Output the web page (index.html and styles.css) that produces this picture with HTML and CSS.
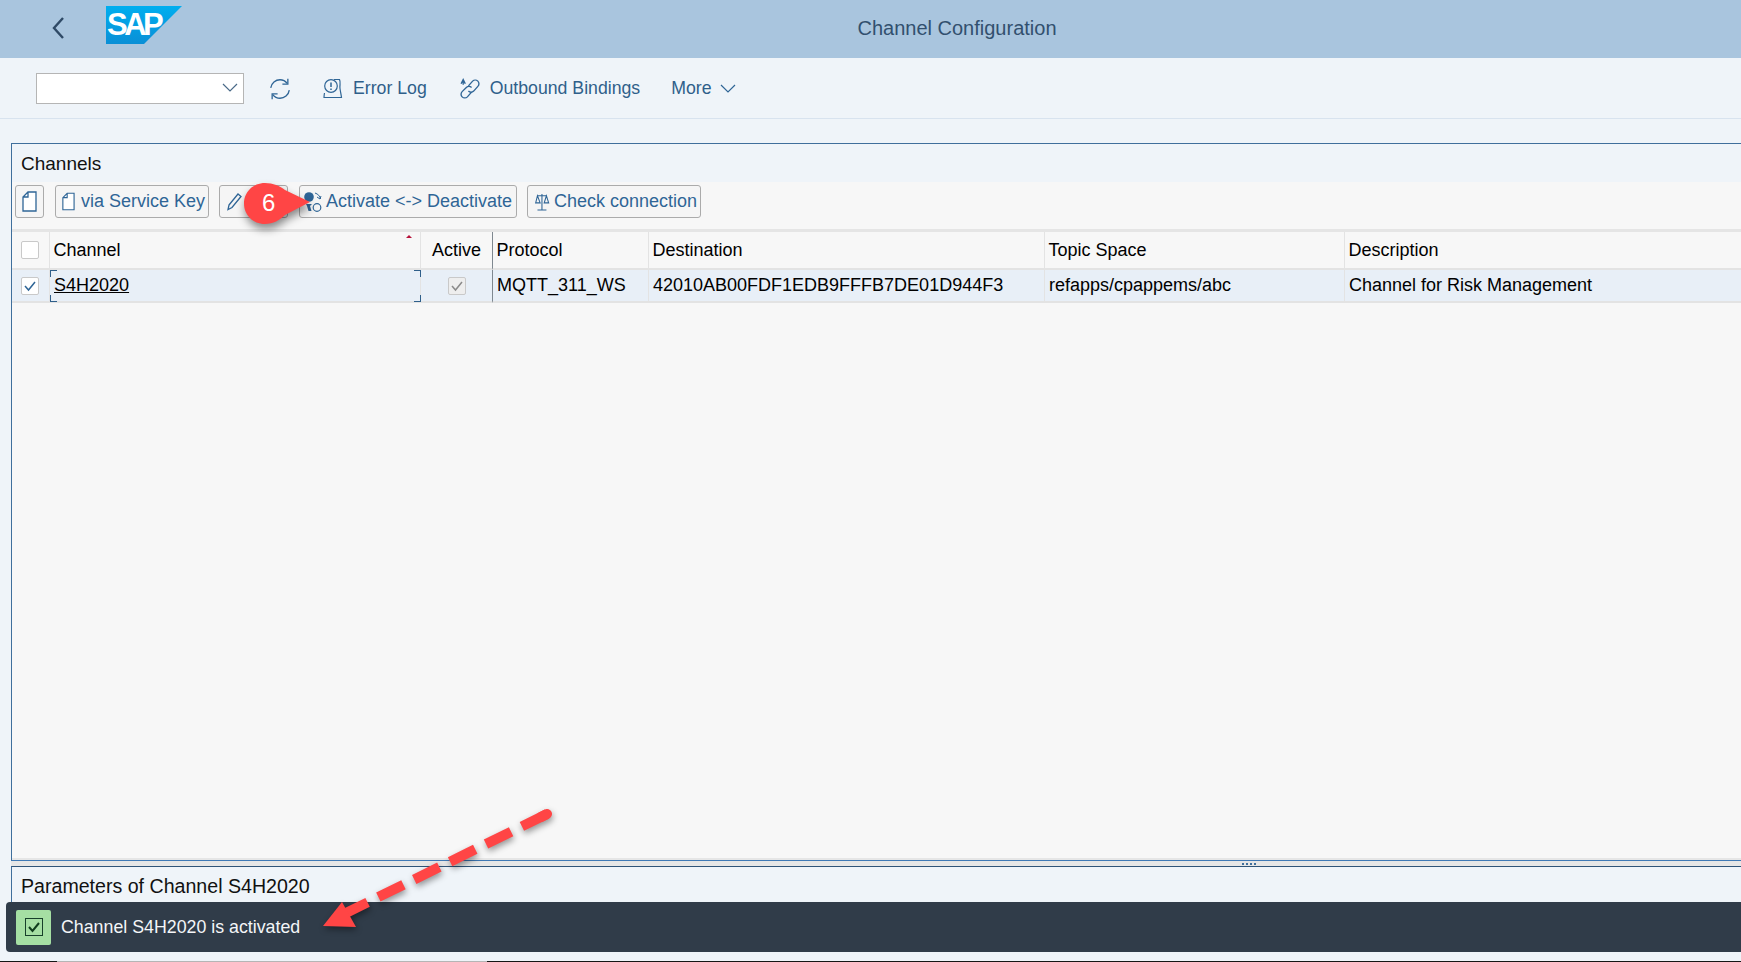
FILE: index.html
```html
<!DOCTYPE html>
<html lang="en">
<head>
<meta charset="utf-8">
<title>Channel Configuration</title>
<link rel="stylesheet" href="styles.css">
</head>
<body>
<header class="shell">
  <svg class="back" width="14" height="24" viewBox="0 0 14 24"><path d="M12 2 3 12l9 10" fill="none" stroke="#2f4a66" stroke-width="2.4"/></svg>
  <div class="logo">
    <svg width="76" height="38" viewBox="0 0 76 38"><defs><linearGradient id="sapg" x1="0" y1="0" x2="0" y2="1"><stop offset="0" stop-color="#00aeef"/><stop offset="1" stop-color="#0a8fd6"/></linearGradient></defs><polygon points="0,0 76,0 38,38 0,38" fill="url(#sapg)"/></svg>
    <span class="logo-text">SAP</span>
  </div>
  <div class="title">Channel Configuration</div>
</header>

<nav class="toolbar">
  <div class="select"><svg width="16" height="10" viewBox="0 0 16 10"><path d="M1 1l7 7 7-7" fill="none" stroke="#4a6a88" stroke-width="1.2"/></svg></div>
  <svg class="tool-refresh" width="24" height="24" viewBox="0 0 22 22" fill="none" stroke="#2f6596" stroke-width="1.2"><path d="M2.500 10C3.100 5.600 7 2.500 11 2.500c2.800 0 5 1.200 6.600 3.400"/><path d="M18.200 1.500v5h-5"/><path d="M19.500 12c-.6 4.400-4.500 7.500-8.500 7.500-2.800 0-5-1.200-6.600-3.400"/><path d="M3.800 20.500v-5h5"/></svg>
  <div class="tool tool-error">
    <svg width="20" height="22" viewBox="0 0 20 22" fill="none" stroke="#2f6596" stroke-width="1.2"><circle cx="8" cy="8" r="6.300"/><path d="M8 4.500v4.500M8 10.500v1.500" stroke-width="1.500"/><path d="M11 1.500h5.500c1.500 3 0 5 .5 9 .3 2.500 1 5 1.500 9H1c0-1.500.2-3 .5-4.500"/></svg>
    <span>Error Log</span>
  </div>
  <div class="tool tool-bind">
    <svg width="22" height="24" viewBox="0 0 21 22" fill="none" stroke="#2f6596" stroke-width="1.300"><path d="M9 8l4-4.500a3.500 3.500 0 0 1 5 5L14 13a3.500 3.500 0 0 1-5 0"/><path d="M12 14l-4 4.500a3.500 3.500 0 0 1-5-5L7 9.500a3.500 3.500 0 0 1 5 0"/><path d="M2 6l2-4 2 4M4 2v5"/></svg>
    <span>Outbound Bindings</span>
  </div>
  <div class="tool tool-more">
    <span>More</span>
    <svg width="16" height="10" viewBox="0 0 16 10"><path d="M1 1l7 7 7-7" fill="none" stroke="#2f6596" stroke-width="1.200"/></svg>
  </div>
</nav>

<main class="content">
  <section class="panel">
    <h2 class="panel-title">Channels</h2>
    <div class="actions">
      <button class="btn btn-new"><svg class="page" width="15" height="21" viewBox="0 0 15 21"><path d="M6 1h8v19H1V6zM6 1v5H1" fill="#fff" stroke="#2f6596" stroke-width="1.300"/></svg></button>
      <button class="btn btn-key"><svg class="page" width="15" height="21" viewBox="0 0 15 21"><path d="M6 1h8v19H1V6zM6 1v5H1" fill="#fff" stroke="#2f6596" stroke-width="1.300"/></svg>via Service Key</button>
      <button class="btn btn-edit"><svg width="18" height="20" viewBox="0 0 18 20"><path d="M4 13 13 2l3 2.500-9 11-4 2z" fill="none" stroke="#2f6596" stroke-width="1.300"/></svg></button>
      <button class="btn btn-activate"><svg width="20" height="22" viewBox="0 0 20 22"><circle cx="6" cy="6" r="4.800" fill="#2f6596"/><path d="M3 13h6l-2 2 1.500 5h-3L4 15z" fill="#2f6596"/><circle cx="14" cy="16.500" r="3.800" fill="none" stroke="#2f6596" stroke-width="1.200"/><path d="M12 2c3 1 5 3 5.500 6M14 6l3 2 1-3" fill="none" stroke="#2f6596"/></svg>Activate &lt;-&gt; Deactivate</button>
      <button class="btn btn-check"><svg width="20" height="22" viewBox="0 0 20 22" fill="none" stroke="#2f6596" stroke-width="1.200"><path d="M10 2v18M5 20h10M5 4h10"/><path d="M5 4 3 12h5zM15 4l-2.500 8h5z"/></svg>Check connection</button>
    </div>
    <div class="table">
      <div class="cell head cell-sel"><span class="cb"></span></div>
      <div class="cell head cell-channel">Channel<i class="sort"></i></div>
      <div class="cell head cell-active">Active</div>
      <div class="cell head cell-div">Protocol</div>
      <div class="cell head">Destination</div>
      <div class="cell head">Topic Space</div>
      <div class="cell head last">Description</div>

      <div class="cell row cell-sel"><span class="cb"><svg width="14" height="12" viewBox="0 0 14 12"><path d="M2 6l3.500 4L12 2" fill="none" stroke="#2f6596" stroke-width="1.500"/></svg></span></div>
      <div class="cell row cell-focus"><u class="link">S4H2020</u><i class="corner tl"></i><i class="corner tr"></i><i class="corner bl"></i><i class="corner br"></i></div>
      <div class="cell row cell-active"><span class="cb cb-off"><svg width="14" height="12" viewBox="0 0 14 12"><path d="M2 6l3.500 4L12 2" fill="none" stroke="#8a8a8a" stroke-width="1.500"/></svg></span></div>
      <div class="cell row cell-div">MQTT_311_WS</div>
      <div class="cell row">42010AB00FDF1EDB9FFFB7DE01D944F3</div>
      <div class="cell row">refapps/cpappems/abc</div>
      <div class="cell row last">Channel for Risk Management</div>
    </div>
  </section>

  <div class="splitter"><i></i><i></i><i></i><i></i></div>

  <section class="params">
    <h2 class="panel-title">Parameters of Channel S4H2020</h2>
  </section>

  <div class="message">
    <span class="msg-icon"><span class="msg-box"><svg width="14" height="12" viewBox="0 0 14 12"><path d="M2 6l3.500 4L12 2" fill="none" stroke="#0f3d1c" stroke-width="2"/></svg></span></span>
    <span class="msg-text">Channel S4H2020 is activated</span>
  </div>
</main>

<div class="foot"><i></i></div>

<svg class="bubble" width="74" height="58" viewBox="0 0 74 58"><path d="M24 2C32 2 39 5 44 9L69 21 44 34C39 39 32 43 24 43 12 43 3 34 3 22.500S12 2 24 2z" fill="#ff4545"/></svg>
<span class="bubble-num">6</span>

<svg class="arrow" width="250" height="130" viewBox="0 0 250 130"><path d="M226 8 25 107" fill="none" stroke="#ff4545" stroke-width="10" stroke-dasharray="28 12"/><path d="M226 8l-6 3" fill="none" stroke="#ff4545" stroke-width="10" stroke-linecap="round"/><polygon points="2,120 21,96 35,121" fill="#ff4545"/></svg>
</body>
</html>
```
FILE: styles.css
```css
* { box-sizing: border-box; }
html, body { margin: 0; height: 100%; }
body {
  position: relative;
  width: 1741px;
  height: 962px;
  overflow: hidden;
  display: flex;
  flex-direction: column;
  background: #eff4f9;
  font-family: "Liberation Sans", Arial, sans-serif;
  color: #000;
}
.shell {
  height: 58px;
  flex: none;
  background: #a9c5de;
  display: flex;
  align-items: flex-start;
  position: relative;
  padding-left: 51px;
}
.back { margin-top: 16px; }
.logo { position: relative; margin: 6px 0 0 41px; width: 76px; height: 38px; }
.logo svg { display: block; }
.logo-text {
  position: absolute;
  left: 1px; top: 3px;
  font-size: 31px;
  line-height: 32px;
  font-weight: bold;
  letter-spacing: -3.500px;
  color: #fff;
}
.title {
  position: absolute;
  left: 0; right: 0; top: 15px;
  padding-left: 173px;
  text-align: center;
  font-size: 20px;
  line-height: 26px;
  color: #32506e;
}
.toolbar {
  height: 61px;
  flex: none;
  display: flex;
  align-items: center;
  padding: 1px 0 0 36px;
  border-bottom: 1px solid #d8e3ef;
  color: #2f5f8a;
  font-size: 17.700px;
}
.select {
  width: 208px;
  height: 31px;
  margin-top: -1px;
  background: #fff;
  border: 1px solid #b5b5b5;
  display: flex;
  align-items: center;
  justify-content: flex-end;
  padding-right: 5px;
}
.tool-refresh { margin-left: 24px; }
.tool { display: flex; align-items: center; }
.tool-error { margin-left: 31px; gap: 10px; }
.tool-bind { margin-left: 32px; gap: 9px; }
.tool-more { margin-left: 31px; gap: 8px; }
.content {
  flex: 1;
  display: flex;
  flex-direction: column;
  padding: 24px 0 0 0;
  min-height: 0;
}
.panel {
  height: 718px;
  flex: none;
  margin-left: 11px;
  background: #f7f7f7;
  border-top: 1px solid #3f6f9c;
  border-left: 1px solid #3f6f9c;
  border-bottom: 1px solid #3f79b5;
  box-shadow: inset 0 -2px 0 #e6e6e6;
  display: flex;
  flex-direction: column;
}
.panel-title {
  margin: 0;
  height: 38px;
  padding-left: 9px;
  background: #eff4f9;
  font-size: 19px;
  line-height: 40px;
  font-weight: normal;
  color: #111;
}
.actions {
  height: 50px;
  flex: none;
  display: flex;
  align-items: flex-start;
  padding: 3px 0 0 3px;
  gap: 11px;
  border-bottom: 3px solid #e5e5e5;
}
.btn {
  height: 33px;
  padding: 0 3px;
  display: flex;
  align-items: center;
  gap: 2px;
  background: #f5f5f5;
  border: 1px solid #ababab;
  border-radius: 3px;
  font: 18px "Liberation Sans", Arial, sans-serif;
  color: #2f6596;
  white-space: nowrap;
}
.btn-new { width: 29px; justify-content: center; padding: 0; }
.btn-key { width: 154px; padding-left: 6px; gap: 6px; margin-right: -1px; }
.btn-edit { width: 69px; padding-left: 5px; }
.btn-activate { width: 218px; padding-left: 3px; gap: 3px; margin-right: -1px; }
.btn-check { width: 174px; padding-left: 5px; gap: 3px; }
.table {
  display: grid;
  grid-template-columns: 38px 371px 72px 156px 396px 300px 1fr;
  grid-template-rows: 38px 33px;
}
.cell {
  display: flex;
  align-items: center;
  font-size: 18px;
  white-space: nowrap;
  border-right: 1px solid #e3e3e3;
  border-bottom: 2px solid #e3e3e3;
  position: relative;
}
.cell.last { border-right: none; }
.head { padding-left: 3.500px; }
.row { background: #e8eff7; padding-left: 4px; }
.cell-sel { padding-left: 9px; }
.cell-active { justify-content: center; padding-left: 0; }
.cell-div { border-left: 1px solid #7f8890; margin-left: -1px; }
.cb {
  width: 18px;
  height: 18px;
  background: #fff;
  border: 1px solid #c9c9c9;
  border-radius: 2px;
  display: flex;
  align-items: center;
  justify-content: center;
}
.cb-off { background: #eeeeee; }
.sort {
  position: absolute;
  right: 8px; top: 3px;
  border-left: 3px solid transparent;
  border-right: 3px solid transparent;
  border-bottom: 3px solid #b8123a;
}
.corner { position: absolute; width: 7px; height: 7px; border: 0 solid #2f5f8a; }
.tl { left: 0; top: 0; border-width: 1px 0 0 1px; }
.tr { right: -1px; top: 0; border-width: 1px 1px 0 0; }
.bl { left: 0; bottom: -1px; border-width: 0 0 1px 1px; }
.br { right: -1px; bottom: -1px; border-width: 0 1px 1px 0; }
.link { color: #000; }
.splitter {
  height: 5px;
  flex: none;
  margin-left: 11px;
  background: #e6e6e6;
  display: flex;
  align-items: center;
  gap: 2px;
  padding-left: 1231px;
}
.splitter i { width: 2px; height: 2px; background: #3f6f9c; }
.params {
  height: 36px;
  flex: none;
  margin-left: 11px;
  border-top: 1px solid #2f5478;
  border-left: 1px solid #3f6f9c;
}
.params .panel-title { height: 35px; line-height: 38px; font-size: 19.600px; }
.message {
  height: 50px;
  flex: none;
  margin-left: 6px;
  background: #303c49;
  border-radius: 4px 0 0 4px;
  display: flex;
  align-items: center;
  padding-left: 10px;
  gap: 10px;
}
.msg-icon {
  width: 35px;
  height: 35px;
  background: #a5dfa3;
  border-radius: 2px;
  display: flex;
  align-items: center;
  justify-content: center;
}
.msg-box {
  width: 18px;
  height: 18px;
  border: 1px solid #17402a;
  display: flex;
  align-items: center;
  justify-content: center;
}
.msg-text { color: #f4f6f8; font-size: 17.800px; }
.foot { height: 1px; margin-top: auto; background: #161616; flex: none; padding-left: 57px; }
.foot i { display: block; width: 430px; height: 1px; background: #b5b5b5; }
.bubble {
  position: absolute;
  left: 241px; top: 181px;
  filter: drop-shadow(1px 5px 4px rgba(0,0,0,.45));
}
.bubble-num {
  position: absolute;
  left: 262px; top: 189px;
  font-size: 24px;
  line-height: 28px;
  color: #fff;
}
.arrow {
  position: absolute;
  left: 321px; top: 806px;
  filter: drop-shadow(1px 3px 3px rgba(0,0,0,.4));
}
```
